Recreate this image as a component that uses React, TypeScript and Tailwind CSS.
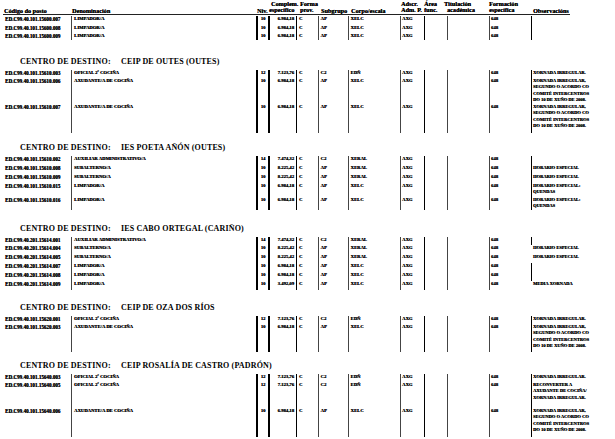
import React from "react";

type Row = {
  code: string;
  den: string;
  niv: string;
  comp: string;
  sub: string;
  corpo: string;
  obs: string[];
  h: string;
  noObsBar?: boolean;
};

type Section = {
  name?: string;
  mt: string;
  rows: Row[];
};

const COLS =
  "grid grid-cols-[71px_185px_12px_28px_22px_30px_52px_24px_23px_42px_42px_84px]";

const XI = [
  "XORNADA IRREGULAR,",
  "SEGUNDO O ACORDO CO",
  "COMITÉ INTERCENTROS",
  "DO 10 DE XUÑO DE 2008.",
];

const sections: Section[] = [
  {
    mt: "mt-[1px]",
    rows: [
      { code: "ED.C99.40.101.15600.007", den: "LIMPADOR/A", niv: "10", comp: "6.984,18", sub: "AP", corpo: "XELC", obs: [], h: "h-[8.5px]" },
      { code: "ED.C99.40.101.15600.008", den: "LIMPADOR/A", niv: "10", comp: "6.984,18", sub: "AP", corpo: "XELC", obs: [], h: "h-[8.5px]" },
      { code: "ED.C99.40.101.15600.009", den: "LIMPADOR/A", niv: "10", comp: "6.984,18", sub: "AP", corpo: "XELC", obs: [], h: "h-[7px]" },
    ],
  },
  {
    name: "CEIP DE OUTES (OUTES)",
    mt: "mt-[17px]",
    rows: [
      { code: "ED.C99.40.101.15610.003", den: "OFICIAL 2ª COCIÑA", niv: "12", comp: "7.123,76", sub: "C2", corpo: "EDÑ", obs: ["XORNADA IRREGULAR."], h: "h-[8px]" },
      { code: "ED.C99.40.101.15610.006", den: "AXUDANTE/A DE COCIÑA", niv: "10", comp: "6.984,18", sub: "AP", corpo: "XELC", obs: XI, h: "h-[26px]" },
      { code: "ED.C99.40.101.15610.007", den: "AXUDANTE/A DE COCIÑA", niv: "10", comp: "6.984,18", sub: "AP", corpo: "XELC", obs: XI, h: "h-[29px]" },
    ],
  },
  {
    name: "IES POETA AÑÓN (OUTES)",
    mt: "mt-[10px]",
    rows: [
      { code: "ED.C99.40.101.15610.002", den: "AUXILIAR ADMINISTRATIVO/A", niv: "14", comp: "7.474,32", sub: "C2", corpo: "XERAL", obs: [], h: "h-[9px]" },
      { code: "ED.C99.40.101.15610.008", den: "SUBALTERNO/A", niv: "10", comp: "8.225,42", sub: "AP", corpo: "XERAL", obs: ["HORARIO ESPECIAL"], h: "h-[9px]" },
      { code: "ED.C99.40.101.15610.009", den: "SUBALTERNO/A", niv: "10", comp: "8.225,42", sub: "AP", corpo: "XERAL", obs: ["HORARIO ESPECIAL"], h: "h-[9px]" },
      { code: "ED.C99.40.101.15610.015", den: "LIMPADOR/A", niv: "10", comp: "6.984,18", sub: "AP", corpo: "XELC", obs: ["HORARIO ESPECIAL:", "QUENDAS"], h: "h-[14px]" },
      { code: "ED.C99.40.101.15610.016", den: "LIMPADOR/A", niv: "10", comp: "6.984,18", sub: "AP", corpo: "XELC", obs: ["HORARIO ESPECIAL:", "QUENDAS"], h: "h-[11px]" },
    ],
  },
  {
    name: "IES CABO ORTEGAL (CARIÑO)",
    mt: "mt-[16px]",
    rows: [
      { code: "ED.C99.40.201.15614.001", den: "AUXILIAR ADMINISTRATIVO/A", niv: "14", comp: "7.474,32", sub: "C2", corpo: "XERAL", obs: [], h: "h-[8px]" },
      { code: "ED.C99.40.201.15614.004", den: "SUBALTERNO/A", niv: "10", comp: "8.225,42", sub: "AP", corpo: "XERAL", obs: ["HORARIO ESPECIAL"], h: "h-[9px]", noObsBar: true },
      { code: "ED.C99.40.201.15614.005", den: "SUBALTERNO/A", niv: "10", comp: "8.225,42", sub: "AP", corpo: "XERAL", obs: ["HORARIO ESPECIAL"], h: "h-[9px]", noObsBar: true },
      { code: "ED.C99.40.201.15614.007", den: "LIMPADOR/A", niv: "10", comp: "6.984,18", sub: "AP", corpo: "XELC", obs: [], h: "h-[9px]" },
      { code: "ED.C99.40.201.15614.008", den: "LIMPADOR/A", niv: "10", comp: "6.984,18", sub: "AP", corpo: "XELC", obs: [], h: "h-[9px]" },
      { code: "ED.C99.40.201.15614.009", den: "LIMPADOR/A", niv: "10", comp: "3.492,09", sub: "AP", corpo: "XELC", obs: ["MEDIA XORNADA"], h: "h-[9px]", noObsBar: true },
    ],
  },
  {
    name: "CEIP DE OZA DOS RÍOS",
    mt: "mt-[13px]",
    rows: [
      { code: "ED.C99.40.101.15620.001", den: "OFICIAL 2ª COCIÑA", niv: "12", comp: "7.123,76", sub: "C2", corpo: "EDÑ", obs: ["XORNADA IRREGULAR."], h: "h-[8px]" },
      { code: "ED.C99.40.101.15620.003", den: "AXUDANTE/A DE COCIÑA", niv: "10", comp: "6.984,18", sub: "AP", corpo: "XELC", obs: XI, h: "h-[28px]" },
    ],
  },
  {
    name: "CEIP ROSALÍA DE CASTRO (PADRÓN)",
    mt: "mt-[9px]",
    rows: [
      { code: "ED.C99.40.101.15640.003", den: "OFICIAL 2ª COCIÑA", niv: "12", comp: "7.123,76", sub: "C2", corpo: "EDÑ", obs: ["XORNADA IRREGULAR."], h: "h-[8px]" },
      { code: "ED.C99.40.101.15640.005", den: "OFICIAL 2ª COCIÑA", niv: "12", comp: "7.123,76", sub: "C2", corpo: "EDÑ", obs: ["RECONVERTER A", "AXUDANTE DE COCIÑA/", "XORNADA IRREGULAR."], h: "h-[26px]" },
      { code: "ED.C99.40.101.15640.006", den: "AXUDANTE/A DE COCIÑA", niv: "10", comp: "6.984,18", sub: "AP", corpo: "XELC", obs: XI, h: "h-[29px]" },
    ],
  },
];

const thin = "border-l border-[#444]";
const mid = "border-l border-black";
const thick = "border-l-2 border-black";

function RowLine({ r }: { r: Row }) {
  return (
    <div
      className={`${COLS} ${r.h} text-[4.7px] leading-[6px] font-bold text-black whitespace-nowrap [text-shadow:0.3px_0_0_#000]`}
    >
      <div className="pl-[5px] text-[5.1px]">{r.code}</div>
      <div className={`${thin} pl-[2px]`}>{r.den}</div>
      <div className={`${thick} text-center`}>{r.niv}</div>
      <div className={`${thick} text-right pr-[2px]`}>{r.comp}</div>
      <div className={`${mid} pl-[2px]`}>C</div>
      <div className={`${thin} pl-[1.5px]`}>{r.sub}</div>
      <div className={`${thin} pl-[1.5px]`}>{r.corpo}</div>
      <div className={`${thin} pl-[1px]`}>AXG</div>
      <div className={mid} />
      <div className={thin} />
      <div className={`${thin} pl-[1px]`}>648</div>
      <div
        className={`${r.noObsBar ? "border-l border-transparent" : mid} pl-[1px] flex flex-col text-[4.5px] leading-[6.3px]`}
      >
        {r.obs.map((o, i) => (
          <span key={i}>{o}</span>
        ))}
      </div>
    </div>
  );
}

function Header() {
  const two = (a: string, b: string, cls = "") => (
    <div className={`flex flex-col ${cls}`}>
      <span>{a}</span>
      <span>{b}</span>
    </div>
  );
  return (
    <div>
      <div
        className={`${COLS} h-[14px] pt-[1px] text-[6.2px] leading-[6px] font-bold text-black whitespace-nowrap [text-shadow:0.2px_0_0_#000]`}
      >
        <div className="flex flex-col justify-end pl-[4px]">Código do posto</div>
        <div className="flex flex-col justify-end pl-[1px]">Denominación</div>
        <div className="flex flex-col justify-end pl-[1px]">Niv.</div>
        <div className="flex flex-col">
          <span className="pl-[3px]">Complem.</span>
          <span className="pl-[1px]">específico</span>
        </div>
        {two("Forma", "prov.", "pl-[4px]")}
        <div className="flex flex-col justify-end pl-[3px]">Subgrupo</div>
        <div className="flex flex-col justify-end pl-[3px]">Corpo/escala</div>
        {two("Adscr.", "Adm. P.", "pl-[1px]")}
        {two("Área", "func.", "pl-0")}
        <div className="flex flex-col">
          <span className="-ml-[3px]">Titulación</span>
          <span>académica</span>
        </div>
        {two("Formación", "específica", "pl-0")}
        <div className="flex flex-col justify-end pl-[2px]">Observacións</div>
      </div>
      <div className="ml-[3px] w-[567px] h-px bg-[#222]" />
    </div>
  );
}

export default function App() {
  return (
    <div className="w-[615px] h-[439px] overflow-hidden bg-white [font-family:'Liberation_Serif','Times_New_Roman',serif] text-black">
      <Header />
      {sections.map((s, i) => (
        <div key={i} className={s.mt}>
          {s.name && (
            <div className="h-[13px] flex pl-[20px] text-[8px] leading-[10px] font-bold whitespace-nowrap tracking-[0.15px]">
              <span className="w-[101px]">CENTRO DE DESTINO:</span>
              <span>{s.name}</span>
            </div>
          )}
          {s.rows.map((r, j) => (
            <RowLine key={j} r={r} />
          ))}
        </div>
      ))}
    </div>
  );
}
